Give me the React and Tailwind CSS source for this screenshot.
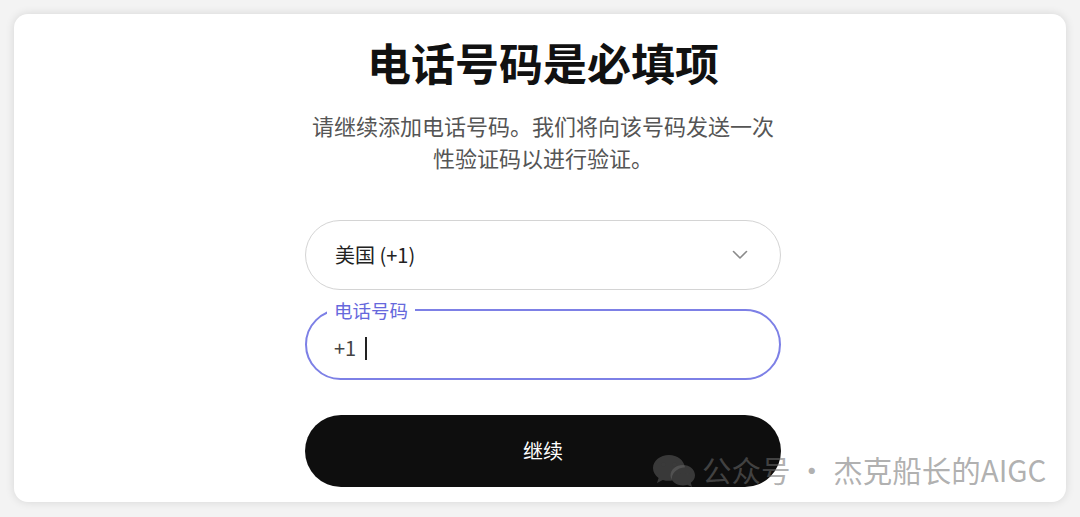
import React from 'react';

const cjk = { fontFamily: '"Noto Sans CJK SC", "Noto Sans", sans-serif' };

const Chevron = () => (
  <svg width="16" height="10" viewBox="0 0 16 10" fill="none">
    <path d="M1.5 1.5 L8 8 L14.5 1.5" stroke="#8a8a8a" strokeWidth="1.6" strokeLinecap="round" strokeLinejoin="round" />
  </svg>
);

const WechatIcon = () => (
  <svg width="44" height="34" viewBox="0 0 44 34">
    <g fill="rgba(110,110,110,0.45)">
      <path d="M17 2C8.2 2 1 7.8 1 15c0 4 2.2 7.5 5.6 9.9L5 30l5.8-3.1c1.9.6 4 .9 6.2.9 1 0 2-.1 3-.2C18.6 21 25 14.5 33 14.2 32 7.3 25.3 2 17 2z" />
      <path d="M31 16c-7 0-12.5 4.6-12.5 10.2S24 36.4 31 36.4c1.5 0 3-.2 4.3-.6L40 38l-1.2-4.2c2.6-1.9 4.2-4.6 4.2-7.6C43 20.6 37.8 16 31 16z" transform="translate(0,-4)" />
    </g>
    <g fill="rgba(60,60,60,0.35)">
      <circle cx="11.5" cy="11.5" r="2" />
      <circle cx="22.5" cy="11.5" r="2" />
      <circle cx="26.5" cy="20.5" r="1.6" />
      <circle cx="35.5" cy="20.5" r="1.6" />
    </g>
  </svg>
);

const App = () => (
  <div className="w-[1080px] h-[517px] bg-[#f3f3f3] p-[14px]" style={cjk}>
    <div className="relative w-full h-[488px] bg-white rounded-[14px] shadow-[0_0_10px_rgba(0,0,0,0.12)] flex flex-col items-center pt-[22px] pl-[6px]">
      <h1 className="text-[44px] leading-[53px] font-bold text-[#111]">电话号码是必填项</h1>

      <p className="mt-[20px] text-[22px] leading-[32px] text-[#555] text-center">
        请继续添加电话号码。我们将向该号码发送一次
        <br />
        性验证码以进行验证。
      </p>

      <div className="mt-[47px] w-[476px] flex flex-col">
        <div className="h-[70px] rounded-full border-[1.5px] border-[#d4d4d4] flex items-center justify-between pl-[29px] pr-[32px]">
          <span className="text-[20px] text-[#222]">美国 (+1)</span>
          <Chevron />
        </div>

        <fieldset className="mt-[10px] h-[80px] rounded-[36px] border-2 border-[#7d80e6] px-[27px] pb-[2px] m-0 min-w-0">
          <legend className="ml-[-7px] px-[7px] text-[18.5px] leading-[20px] text-[#6668dc]">电话号码</legend>
          <div className="flex items-center h-[56px] text-[20px] text-[#444]">
            <span>+1</span>
            <span className="ml-[9px] w-[2px] h-[23px] bg-[#222]" />
          </div>
        </fieldset>

        <button className="mt-[35px] h-[72px] rounded-full bg-[#0e0e0e] text-white text-[20px] flex items-center justify-center">
          继续
        </button>
      </div>

      <div className="absolute left-[638px] top-[439px] flex items-center gap-[6px] text-[29.5px] text-[rgba(110,110,110,0.55)] leading-none">
        <WechatIcon />
        <span>公众号 · 杰克船长的AIGC</span>
      </div>
    </div>
  </div>
);

export default App;
